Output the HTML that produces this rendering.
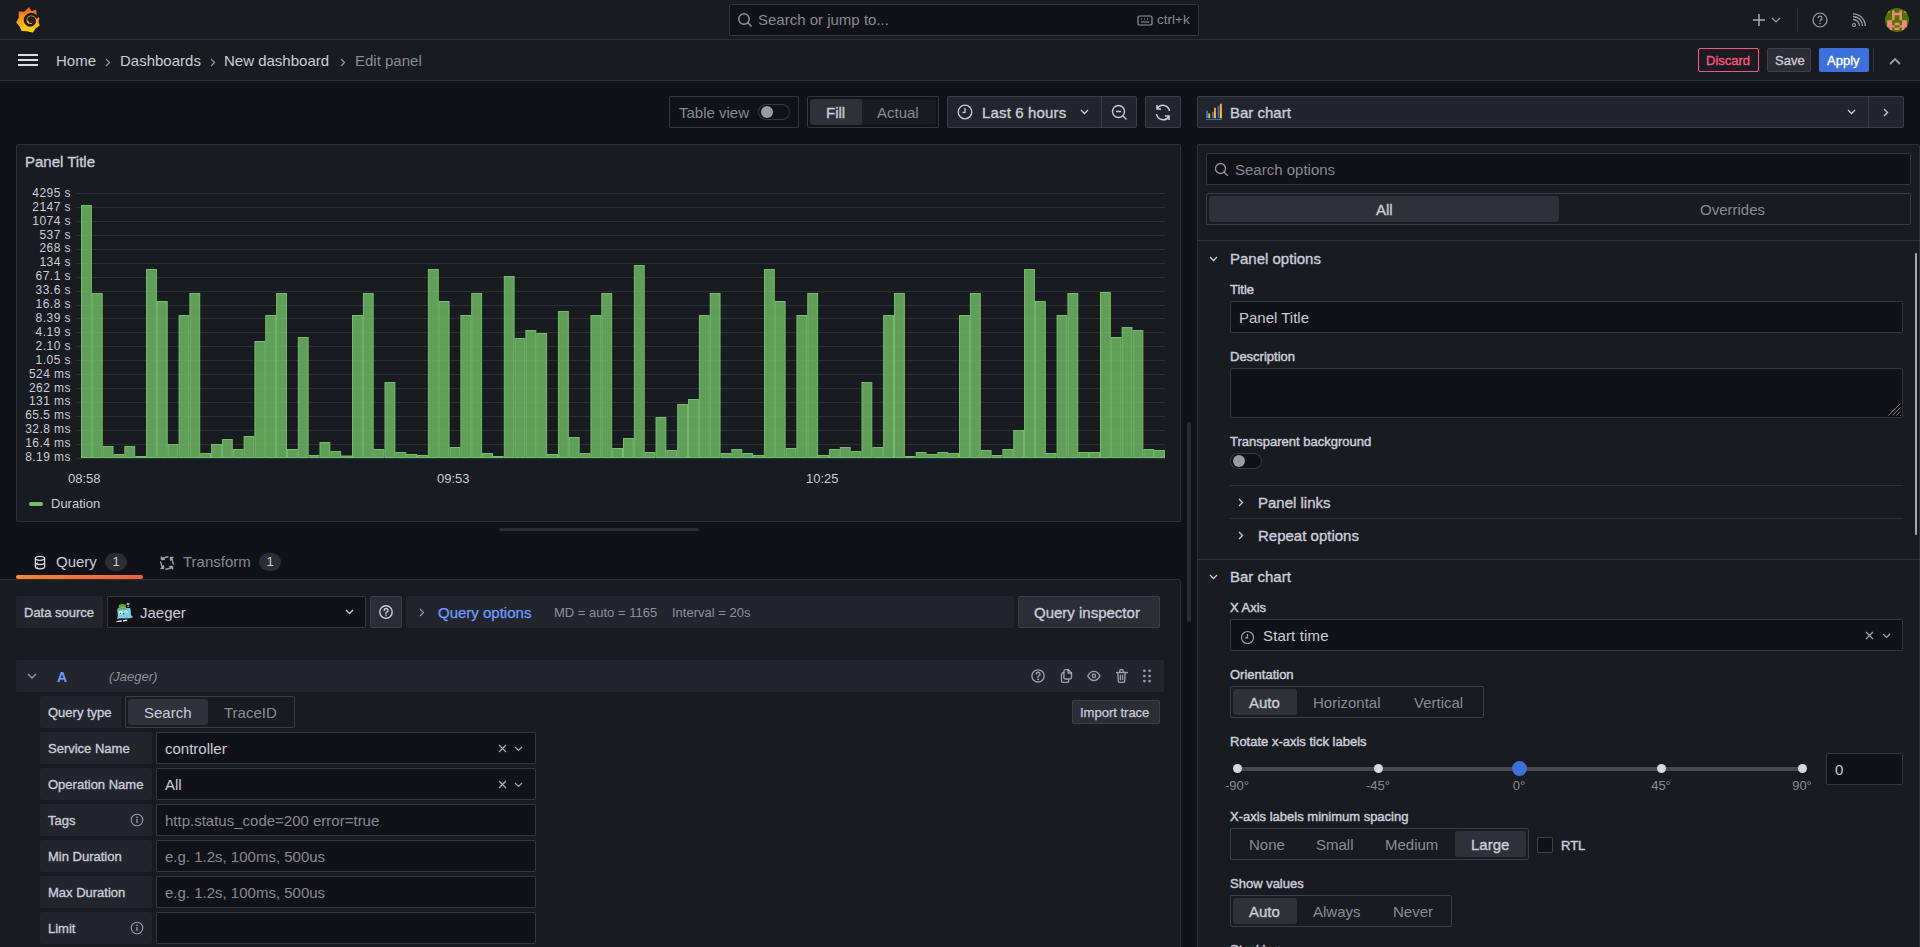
<!DOCTYPE html>
<html><head><meta charset="utf-8">
<style>
*{box-sizing:border-box;margin:0;padding:0}
html,body{width:1920px;height:947px;overflow:hidden}
body{background:#111217;font-family:"Liberation Sans",sans-serif;color:#ccccdc;position:relative;font-size:14px}
.a{position:absolute}
.t{position:absolute;white-space:nowrap;line-height:16px}
.m{-webkit-text-stroke:0.35px currentColor}
.sec{color:rgba(204,204,220,0.65)}
.lbl{position:absolute;white-space:nowrap;font-size:13px;line-height:14px;margin-top:0.5px;-webkit-text-stroke:0.45px currentColor;color:#ccccdc}
.inp{position:absolute;background:#111217;border:1px solid rgba(204,204,220,0.2);border-radius:2px}
.btn2{position:absolute;background:#22252b;border:1px solid rgba(204,204,220,0.15);border-radius:2px}
.flab{position:absolute;background:#22252b;border-radius:2px}
.rg{position:absolute;border:1px solid rgba(204,204,220,0.2);border-radius:2px;background:#181b1f}
.rsel{position:absolute;background:#2e3137;border-radius:3px}
svg{position:absolute;overflow:visible}
</style></head><body>

<!-- ===== TOP NAV ===== -->
<div class="a" style="left:0;top:0;width:1920px;height:40px;background:#181b1f;border-bottom:1px solid rgba(204,204,220,0.12)"></div>
<!-- grafana logo -->
<svg style="left:12px;top:4px" width="32" height="32" viewBox="0 0 32 32">
 <defs><linearGradient id="lg" x1="0" y1="1" x2="0" y2="0"><stop offset="0" stop-color="#fbd30c"/><stop offset="0.55" stop-color="#f99a1f"/><stop offset="1" stop-color="#f05a28"/></linearGradient></defs>
 <path fill="url(#lg)" stroke="url(#lg)" stroke-width="1.2" stroke-linejoin="round" d="M16.90 3.90 L19.32 8.09 L23.60 6.40 L24.14 11.66 L26.70 14.50 L25.88 17.74 L27.00 21.30 L23.13 23.94 L20.60 28.00 L15.27 26.75 L10.10 26.40 L8.07 22.15 L4.90 18.40 L7.26 13.97 L7.30 8.10 L12.85 8.24Z"/>
 <path fill="none" stroke="#181b1f" stroke-width="2.6" stroke-linecap="round" d="M24.88 13.31 L24.45 12.71 L23.96 12.16 L23.42 11.67 L22.84 11.24 L22.22 10.88 L21.57 10.60 L20.90 10.38 L20.22 10.24 L19.53 10.17 L18.84 10.18 L18.16 10.26 L17.51 10.40 L16.87 10.62 L16.27 10.90 L15.71 11.24 L15.20 11.63 L14.73 12.07 L14.31 12.56 L13.96 13.08 L13.66 13.63 L13.43 14.20 L13.26 14.79 L13.15 15.39 L13.11 15.99 L13.14 16.59 L13.22 17.17 L13.37 17.73 L13.58 18.27 L13.84 18.78 L14.14 19.26 L14.50 19.69 L14.89 20.08 L15.32 20.42 L15.77 20.71 L16.25 20.95 L16.75 21.13 L17.26 21.25 L17.77 21.32 L18.28 21.34 L18.78 21.30 L19.27 21.21 L19.74 21.06 L20.19 20.88 L20.61 20.64 L21.00 20.37 L21.35 20.06 L21.66 19.72 L21.93 19.35 L22.15 18.96 L22.33 18.55 L22.47 18.14 L22.55 17.71 L22.59 17.29 L22.59 16.87 L22.53 16.46 L22.44 16.06 L22.31 15.68 L22.14 15.33 L21.93 14.99 L21.69 14.69 L21.43 14.42 L21.14 14.19 L20.84 13.99 L20.52 13.82 L20.19 13.70 L19.85 13.61 L19.51 13.56 L19.18 13.55 L18.85 13.57 L18.53 13.63 L18.23 13.72 L17.94 13.84 L17.67 13.99 L17.43 14.17 L17.21 14.36 L17.02 14.58 L16.86 14.81 L16.72 15.05 L16.62 15.29 L16.54 15.55"/>
 <circle cx="19" cy="17" r="2.3" fill="#181b1f"/>
</svg>
<!-- search -->
<div class="a" style="left:729px;top:4px;width:470px;height:32px;background:#111217;border:1px solid rgba(204,204,220,0.2);border-radius:2px"></div>
<svg style="left:737px;top:12px" width="16" height="16" viewBox="0 0 16 16"><circle cx="7" cy="7" r="5.2" fill="none" stroke="#ccccdc" stroke-opacity=".7" stroke-width="1.4"/><path d="M11 11l3.5 3.5" stroke="#ccccdc" stroke-opacity=".7" stroke-width="1.4"/></svg>
<div class="t sec" style="left:758px;top:12px;font-size:15px">Search or jump to...</div>
<svg style="left:1137px;top:15px" width="16" height="11" viewBox="0 0 16 11"><rect x="1" y="1" width="14" height="9" rx="1.5" fill="none" stroke="#ccccdc" stroke-opacity=".7" stroke-width="1.2"/><path d="M4 4h1M7 4h1M10 4h1M4 7h8" stroke="#ccccdc" stroke-opacity=".7" stroke-width="1.2"/></svg>
<div class="t sec" style="left:1157px;top:12px;font-size:13.5px">ctrl+k</div>
<!-- right icons -->
<svg style="left:1752px;top:13px" width="14" height="14" viewBox="0 0 14 14"><path d="M7 1v12M1 7h12" stroke="#ccccdc" stroke-opacity=".8" stroke-width="1.5"/></svg>
<svg style="left:1771px;top:17px" width="10" height="6" viewBox="0 0 10 6"><path d="M1 1l4 4 4-4" fill="none" stroke="#ccccdc" stroke-opacity=".75" stroke-width="1.2"/></svg>
<div class="a" style="left:1797px;top:8px;width:1px;height:24px;background:rgba(204,204,220,0.15)"></div>
<svg style="left:1812px;top:12px" width="16" height="16" viewBox="0 0 16 16"><circle cx="8" cy="8" r="7" fill="none" stroke="#ccccdc" stroke-opacity=".75" stroke-width="1.2"/><path d="M6 6.2a2 2 0 1 1 2.6 1.9c-.4.2-.6.5-.6.9v.6" fill="none" stroke="#ccccdc" stroke-opacity=".75" stroke-width="1.2"/><circle cx="8" cy="11.5" r=".8" fill="#ccccdc" fill-opacity=".75"/></svg>
<svg style="left:1851px;top:13px" width="16" height="15" viewBox="0 0 16 15"><circle cx="3" cy="12" r="1.5" fill="none" stroke="#ccccdc" stroke-opacity=".75" stroke-width="1.2"/><path d="M2 6.5a6.5 6.5 0 0 1 6.5 6.5M2 3.5a9.5 9.5 0 0 1 9.5 9.5M2 .8A12.2 12.2 0 0 1 14.2 13" fill="none" stroke="#ccccdc" stroke-opacity=".75" stroke-width="1.3"/></svg>
<svg style="left:1885px;top:8px" width="24" height="24" viewBox="0 0 24 24"><defs><clipPath id="av"><circle cx="12" cy="12" r="12"/></clipPath></defs><g clip-path="url(#av)"><rect width="24" height="24" fill="#4e7300"/><path fill="#f28a7c" d="M2.20 2.40h2.455v2.455h-2.455zM19.39 2.40h2.455v2.455h-2.455zM7.11 2.40h2.455v2.455h-2.455zM7.11 4.86h2.455v2.455h-2.455zM7.11 7.31h2.455v2.455h-2.455zM7.11 9.77h2.455v2.455h-2.455zM14.48 2.40h2.455v2.455h-2.455zM14.48 4.86h2.455v2.455h-2.455zM14.48 7.31h2.455v2.455h-2.455zM14.48 9.77h2.455v2.455h-2.455zM9.57 4.86h2.455v2.455h-2.455zM12.02 4.86h2.455v2.455h-2.455zM2.20 12.22h2.455v2.455h-2.455zM4.66 12.22h2.455v2.455h-2.455zM2.20 14.68h2.455v2.455h-2.455zM4.66 14.68h2.455v2.455h-2.455zM2.20 17.13h2.455v2.455h-2.455zM4.66 17.13h2.455v2.455h-2.455zM7.11 17.13h2.455v2.455h-2.455zM4.66 19.59h2.455v2.455h-2.455zM16.93 12.22h2.455v2.455h-2.455zM19.39 12.22h2.455v2.455h-2.455zM16.93 14.68h2.455v2.455h-2.455zM19.39 14.68h2.455v2.455h-2.455zM16.93 17.13h2.455v2.455h-2.455zM19.39 17.13h2.455v2.455h-2.455zM14.48 17.13h2.455v2.455h-2.455zM16.93 19.59h2.455v2.455h-2.455zM9.57 14.68h2.455v2.455h-2.455zM12.02 14.68h2.455v2.455h-2.455zM9.57 19.59h2.455v2.455h-2.455zM12.02 19.59h2.455v2.455h-2.455z"/></g></svg>

<!-- ===== BREADCRUMB BAR ===== -->
<div class="a" style="left:0;top:40px;width:1920px;height:41px;background:#181b1f;border-bottom:1px solid rgba(204,204,220,0.12)"></div>
<svg style="left:18px;top:53px" width="20" height="14" viewBox="0 0 20 14"><path d="M0 2h20M0 7h20M0 12h20" stroke="#dcdcea" stroke-width="2"/></svg>
<div class="t" style="left:56px;top:53px;font-size:15px">Home</div>
<svg style="left:105px;top:57.5px" width="6" height="9" viewBox="0 0 6 9"><path d="M1 1l3.5 3.5L1 8" fill="none" stroke="#ccccdc" stroke-opacity=".7" stroke-width="1.2"/></svg>
<div class="t" style="left:120px;top:53px;font-size:15px">Dashboards</div>
<svg style="left:210px;top:57.5px" width="6" height="9" viewBox="0 0 6 9"><path d="M1 1l3.5 3.5L1 8" fill="none" stroke="#ccccdc" stroke-opacity=".7" stroke-width="1.2"/></svg>
<div class="t" style="left:224px;top:53px;font-size:15px">New dashboard</div>
<svg style="left:340px;top:57.5px" width="6" height="9" viewBox="0 0 6 9"><path d="M1 1l3.5 3.5L1 8" fill="none" stroke="#ccccdc" stroke-opacity=".7" stroke-width="1.2"/></svg>
<div class="t sec" style="left:355px;top:53px;font-size:15px">Edit panel</div>

<div class="a" style="left:1698px;top:48px;width:61px;height:24px;border:1px solid #ff5286;border-radius:2px"></div>
<div class="t m" style="left:1706px;top:53px;font-size:13px;color:#ff5286">Discard</div>
<div class="a" style="left:1767px;top:48px;width:44px;height:24px;background:#2c2e33;border:1px solid rgba(204,204,220,0.12);border-radius:2px"></div>
<div class="t m" style="left:1775px;top:53px;font-size:13px;color:#ccccdc">Save</div>
<div class="a" style="left:1819px;top:48px;width:50px;height:24px;background:#3d71d9;border-radius:2px"></div>
<div class="t m" style="left:1827px;top:53px;font-size:13px;color:#ffffff">Apply</div>
<div class="a" style="left:1873px;top:48px;width:1px;height:24px;background:rgba(204,204,220,0.15)"></div>
<svg style="left:1889px;top:58px" width="12" height="7" viewBox="0 0 12 7"><path d="M1 6l5-5 5 5" fill="none" stroke="#ccccdc" stroke-opacity=".75" stroke-width="1.8"/></svg>

<!-- ===== TOOLBAR ===== -->
<div class="a" style="left:669px;top:96px;width:130px;height:32px;border:1px solid rgba(204,204,220,0.2);border-radius:2px"></div>
<div class="t sec" style="left:679px;top:105px;font-size:15px">Table view</div>
<div class="a" style="left:758px;top:104px;width:32px;height:16px;border:1px solid rgba(204,204,220,0.2);border-radius:8px;background:#111217"></div>
<div class="a" style="left:761px;top:106px;width:12px;height:12px;border-radius:6px;background:#9a9aa3"></div>

<div class="a" style="left:807px;top:96px;width:132px;height:32px;border:1px solid rgba(204,204,220,0.2);border-radius:2px;background:#111217"></div><div class="a" style="left:810px;top:99px;width:126px;height:26px;background:#181b1f;border-radius:2px"></div>
<div class="rsel" style="left:810px;top:99px;width:52px;height:26px"></div>
<div class="t m" style="left:826px;top:105px;font-size:15px">Fill</div>
<div class="t sec" style="left:877px;top:105px;font-size:15px">Actual</div>

<div class="btn2" style="left:947px;top:96px;width:190px;height:32px"></div>
<div class="a" style="left:1101px;top:96px;width:1px;height:32px;background:rgba(204,204,220,0.15)"></div>
<svg style="left:957px;top:104px" width="16" height="16" viewBox="0 0 16 16"><circle cx="8" cy="8" r="6.8" fill="none" stroke="#ccccdc" stroke-width="1.3"/><path d="M8 4v4.3H5.5" fill="none" stroke="#ccccdc" stroke-width="1.3"/></svg>
<div class="t m" style="left:982px;top:105px;font-size:15px;letter-spacing:0.15px">Last 6 hours</div>
<svg style="left:1080px;top:109px" width="9" height="6" viewBox="0 0 9 6"><path d="M1 1l3.5 3.5L8 1" fill="none" stroke="#ccccdc" stroke-width="1.3"/></svg>
<svg style="left:1111px;top:104px" width="17" height="17" viewBox="0 0 17 17"><circle cx="7.5" cy="7.5" r="6" fill="none" stroke="#ccccdc" stroke-width="1.4"/><path d="M12 12l3.5 3.5M5 7.5h5" stroke="#ccccdc" stroke-width="1.4"/></svg>
<div class="btn2" style="left:1145px;top:96px;width:36px;height:32px"></div>
<svg style="left:1154px;top:104px" width="18" height="17" viewBox="0 0 18 17"><path d="M15.5 7A6.8 6.8 0 0 0 3 4.5M2.5 10A6.8 6.8 0 0 0 15 12.5" fill="none" stroke="#ccccdc" stroke-width="1.5"/><path d="M3 1v4h4M15 16v-4h-4" fill="none" stroke="#ccccdc" stroke-width="1.5"/></svg>

<!-- ===== PANEL ===== -->
<div class="a" style="left:16px;top:144px;width:1165px;height:378px;background:#181b1f;border:1px solid rgba(204,204,220,0.12);border-radius:2px"></div>
<div class="t m" style="left:25px;top:154px;font-size:15px">Panel Title</div>
<svg class="a" style="left:0;top:0" width="1200" height="530" viewBox="0 0 1200 530"><line x1="76" y1="193.5" x2="1165" y2="193.5" stroke="rgba(240,250,255,0.09)" stroke-width="1"/><line x1="76" y1="207.5" x2="1165" y2="207.5" stroke="rgba(240,250,255,0.09)" stroke-width="1"/><line x1="76" y1="221.5" x2="1165" y2="221.5" stroke="rgba(240,250,255,0.09)" stroke-width="1"/><line x1="76" y1="235.5" x2="1165" y2="235.5" stroke="rgba(240,250,255,0.09)" stroke-width="1"/><line x1="76" y1="249.5" x2="1165" y2="249.5" stroke="rgba(240,250,255,0.09)" stroke-width="1"/><line x1="76" y1="263.5" x2="1165" y2="263.5" stroke="rgba(240,250,255,0.09)" stroke-width="1"/><line x1="76" y1="277.5" x2="1165" y2="277.5" stroke="rgba(240,250,255,0.09)" stroke-width="1"/><line x1="76" y1="291.5" x2="1165" y2="291.5" stroke="rgba(240,250,255,0.09)" stroke-width="1"/><line x1="76" y1="305.5" x2="1165" y2="305.5" stroke="rgba(240,250,255,0.09)" stroke-width="1"/><line x1="76" y1="318.5" x2="1165" y2="318.5" stroke="rgba(240,250,255,0.09)" stroke-width="1"/><line x1="76" y1="332.5" x2="1165" y2="332.5" stroke="rgba(240,250,255,0.09)" stroke-width="1"/><line x1="76" y1="346.5" x2="1165" y2="346.5" stroke="rgba(240,250,255,0.09)" stroke-width="1"/><line x1="76" y1="360.5" x2="1165" y2="360.5" stroke="rgba(240,250,255,0.09)" stroke-width="1"/><line x1="76" y1="374.5" x2="1165" y2="374.5" stroke="rgba(240,250,255,0.09)" stroke-width="1"/><line x1="76" y1="388.5" x2="1165" y2="388.5" stroke="rgba(240,250,255,0.09)" stroke-width="1"/><line x1="76" y1="402.5" x2="1165" y2="402.5" stroke="rgba(240,250,255,0.09)" stroke-width="1"/><line x1="76" y1="416.5" x2="1165" y2="416.5" stroke="rgba(240,250,255,0.09)" stroke-width="1"/><line x1="76" y1="430.5" x2="1165" y2="430.5" stroke="rgba(240,250,255,0.09)" stroke-width="1"/><line x1="76" y1="444.5" x2="1165" y2="444.5" stroke="rgba(240,250,255,0.09)" stroke-width="1"/><line x1="76" y1="458.5" x2="1165" y2="458.5" stroke="rgba(240,250,255,0.09)" stroke-width="1"/><rect x="81.50" y="205.5" width="9.84" height="252.0" fill="rgba(115,191,105,0.8)" stroke="#73bf69" stroke-width="1"/><rect x="92.34" y="293.5" width="9.84" height="164.0" fill="rgba(115,191,105,0.8)" stroke="#73bf69" stroke-width="1"/><rect x="103.18" y="446.5" width="9.84" height="11.0" fill="rgba(115,191,105,0.8)" stroke="#73bf69" stroke-width="1"/><rect x="114.02" y="454.5" width="9.84" height="3.0" fill="rgba(115,191,105,0.8)" stroke="#73bf69" stroke-width="1"/><rect x="124.86" y="446.5" width="9.84" height="11.0" fill="rgba(115,191,105,0.8)" stroke="#73bf69" stroke-width="1"/><rect x="135.70" y="456.5" width="9.84" height="1.0" fill="rgba(115,191,105,0.8)" stroke="#73bf69" stroke-width="1"/><rect x="146.54" y="269.5" width="9.84" height="188.0" fill="rgba(115,191,105,0.8)" stroke="#73bf69" stroke-width="1"/><rect x="157.38" y="301.5" width="9.84" height="156.0" fill="rgba(115,191,105,0.8)" stroke="#73bf69" stroke-width="1"/><rect x="168.22" y="444.5" width="9.84" height="13.0" fill="rgba(115,191,105,0.8)" stroke="#73bf69" stroke-width="1"/><rect x="179.06" y="315.5" width="9.84" height="142.0" fill="rgba(115,191,105,0.8)" stroke="#73bf69" stroke-width="1"/><rect x="189.90" y="293.5" width="9.84" height="164.0" fill="rgba(115,191,105,0.8)" stroke="#73bf69" stroke-width="1"/><rect x="200.74" y="453.5" width="9.84" height="4.0" fill="rgba(115,191,105,0.8)" stroke="#73bf69" stroke-width="1"/><rect x="211.58" y="444.5" width="9.84" height="13.0" fill="rgba(115,191,105,0.8)" stroke="#73bf69" stroke-width="1"/><rect x="222.42" y="439.5" width="9.84" height="18.0" fill="rgba(115,191,105,0.8)" stroke="#73bf69" stroke-width="1"/><rect x="233.26" y="449.5" width="9.84" height="8.0" fill="rgba(115,191,105,0.8)" stroke="#73bf69" stroke-width="1"/><rect x="244.10" y="436.5" width="9.84" height="21.0" fill="rgba(115,191,105,0.8)" stroke="#73bf69" stroke-width="1"/><rect x="254.94" y="341.5" width="9.84" height="116.0" fill="rgba(115,191,105,0.8)" stroke="#73bf69" stroke-width="1"/><rect x="265.78" y="315.5" width="9.84" height="142.0" fill="rgba(115,191,105,0.8)" stroke="#73bf69" stroke-width="1"/><rect x="276.62" y="293.5" width="9.84" height="164.0" fill="rgba(115,191,105,0.8)" stroke="#73bf69" stroke-width="1"/><rect x="287.46" y="449.5" width="9.84" height="8.0" fill="rgba(115,191,105,0.8)" stroke="#73bf69" stroke-width="1"/><rect x="298.30" y="337.5" width="9.84" height="120.0" fill="rgba(115,191,105,0.8)" stroke="#73bf69" stroke-width="1"/><rect x="309.14" y="455.5" width="9.84" height="2.0" fill="rgba(115,191,105,0.8)" stroke="#73bf69" stroke-width="1"/><rect x="319.98" y="442.5" width="9.84" height="15.0" fill="rgba(115,191,105,0.8)" stroke="#73bf69" stroke-width="1"/><rect x="330.82" y="451.5" width="9.84" height="6.0" fill="rgba(115,191,105,0.8)" stroke="#73bf69" stroke-width="1"/><rect x="341.66" y="456.0" width="9.84" height="1.5" fill="rgba(115,191,105,0.8)" stroke="#73bf69" stroke-width="1"/><rect x="352.50" y="315.5" width="9.84" height="142.0" fill="rgba(115,191,105,0.8)" stroke="#73bf69" stroke-width="1"/><rect x="363.34" y="293.5" width="9.84" height="164.0" fill="rgba(115,191,105,0.8)" stroke="#73bf69" stroke-width="1"/><rect x="374.18" y="449.5" width="9.84" height="8.0" fill="rgba(115,191,105,0.8)" stroke="#73bf69" stroke-width="1"/><rect x="385.02" y="382.5" width="9.84" height="75.0" fill="rgba(115,191,105,0.8)" stroke="#73bf69" stroke-width="1"/><rect x="395.86" y="452.5" width="9.84" height="5.0" fill="rgba(115,191,105,0.8)" stroke="#73bf69" stroke-width="1"/><rect x="406.70" y="454.5" width="9.84" height="3.0" fill="rgba(115,191,105,0.8)" stroke="#73bf69" stroke-width="1"/><rect x="417.54" y="455.5" width="9.84" height="2.0" fill="rgba(115,191,105,0.8)" stroke="#73bf69" stroke-width="1"/><rect x="428.38" y="269.5" width="9.84" height="188.0" fill="rgba(115,191,105,0.8)" stroke="#73bf69" stroke-width="1"/><rect x="439.22" y="301.5" width="9.84" height="156.0" fill="rgba(115,191,105,0.8)" stroke="#73bf69" stroke-width="1"/><rect x="450.06" y="447.5" width="9.84" height="10.0" fill="rgba(115,191,105,0.8)" stroke="#73bf69" stroke-width="1"/><rect x="460.90" y="315.5" width="9.84" height="142.0" fill="rgba(115,191,105,0.8)" stroke="#73bf69" stroke-width="1"/><rect x="471.74" y="293.5" width="9.84" height="164.0" fill="rgba(115,191,105,0.8)" stroke="#73bf69" stroke-width="1"/><rect x="482.58" y="453.5" width="9.84" height="4.0" fill="rgba(115,191,105,0.8)" stroke="#73bf69" stroke-width="1"/><rect x="493.42" y="456.5" width="9.84" height="1.0" fill="rgba(115,191,105,0.8)" stroke="#73bf69" stroke-width="1"/><rect x="504.26" y="276.5" width="9.84" height="181.0" fill="rgba(115,191,105,0.8)" stroke="#73bf69" stroke-width="1"/><rect x="515.10" y="338.5" width="9.84" height="119.0" fill="rgba(115,191,105,0.8)" stroke="#73bf69" stroke-width="1"/><rect x="525.94" y="330.5" width="9.84" height="127.0" fill="rgba(115,191,105,0.8)" stroke="#73bf69" stroke-width="1"/><rect x="536.78" y="333.5" width="9.84" height="124.0" fill="rgba(115,191,105,0.8)" stroke="#73bf69" stroke-width="1"/><rect x="547.62" y="454.5" width="9.84" height="3.0" fill="rgba(115,191,105,0.8)" stroke="#73bf69" stroke-width="1"/><rect x="558.46" y="311.5" width="9.84" height="146.0" fill="rgba(115,191,105,0.8)" stroke="#73bf69" stroke-width="1"/><rect x="569.30" y="437.5" width="9.84" height="20.0" fill="rgba(115,191,105,0.8)" stroke="#73bf69" stroke-width="1"/><rect x="580.14" y="453.5" width="9.84" height="4.0" fill="rgba(115,191,105,0.8)" stroke="#73bf69" stroke-width="1"/><rect x="590.98" y="315.5" width="9.84" height="142.0" fill="rgba(115,191,105,0.8)" stroke="#73bf69" stroke-width="1"/><rect x="601.82" y="293.5" width="9.84" height="164.0" fill="rgba(115,191,105,0.8)" stroke="#73bf69" stroke-width="1"/><rect x="612.66" y="448.5" width="9.84" height="9.0" fill="rgba(115,191,105,0.8)" stroke="#73bf69" stroke-width="1"/><rect x="623.50" y="438.5" width="9.84" height="19.0" fill="rgba(115,191,105,0.8)" stroke="#73bf69" stroke-width="1"/><rect x="634.34" y="265.5" width="9.84" height="192.0" fill="rgba(115,191,105,0.8)" stroke="#73bf69" stroke-width="1"/><rect x="645.18" y="452.5" width="9.84" height="5.0" fill="rgba(115,191,105,0.8)" stroke="#73bf69" stroke-width="1"/><rect x="656.02" y="417.5" width="9.84" height="40.0" fill="rgba(115,191,105,0.8)" stroke="#73bf69" stroke-width="1"/><rect x="666.86" y="450.5" width="9.84" height="7.0" fill="rgba(115,191,105,0.8)" stroke="#73bf69" stroke-width="1"/><rect x="677.70" y="404.5" width="9.84" height="53.0" fill="rgba(115,191,105,0.8)" stroke="#73bf69" stroke-width="1"/><rect x="688.54" y="399.5" width="9.84" height="58.0" fill="rgba(115,191,105,0.8)" stroke="#73bf69" stroke-width="1"/><rect x="699.38" y="315.5" width="9.84" height="142.0" fill="rgba(115,191,105,0.8)" stroke="#73bf69" stroke-width="1"/><rect x="710.22" y="293.5" width="9.84" height="164.0" fill="rgba(115,191,105,0.8)" stroke="#73bf69" stroke-width="1"/><rect x="721.06" y="453.5" width="9.84" height="4.0" fill="rgba(115,191,105,0.8)" stroke="#73bf69" stroke-width="1"/><rect x="731.90" y="449.5" width="9.84" height="8.0" fill="rgba(115,191,105,0.8)" stroke="#73bf69" stroke-width="1"/><rect x="742.74" y="453.5" width="9.84" height="4.0" fill="rgba(115,191,105,0.8)" stroke="#73bf69" stroke-width="1"/><rect x="753.58" y="455.5" width="9.84" height="2.0" fill="rgba(115,191,105,0.8)" stroke="#73bf69" stroke-width="1"/><rect x="764.42" y="269.5" width="9.84" height="188.0" fill="rgba(115,191,105,0.8)" stroke="#73bf69" stroke-width="1"/><rect x="775.26" y="301.5" width="9.84" height="156.0" fill="rgba(115,191,105,0.8)" stroke="#73bf69" stroke-width="1"/><rect x="786.10" y="448.5" width="9.84" height="9.0" fill="rgba(115,191,105,0.8)" stroke="#73bf69" stroke-width="1"/><rect x="796.94" y="315.5" width="9.84" height="142.0" fill="rgba(115,191,105,0.8)" stroke="#73bf69" stroke-width="1"/><rect x="807.78" y="293.5" width="9.84" height="164.0" fill="rgba(115,191,105,0.8)" stroke="#73bf69" stroke-width="1"/><rect x="818.62" y="455.5" width="9.84" height="2.0" fill="rgba(115,191,105,0.8)" stroke="#73bf69" stroke-width="1"/><rect x="829.46" y="449.5" width="9.84" height="8.0" fill="rgba(115,191,105,0.8)" stroke="#73bf69" stroke-width="1"/><rect x="840.30" y="447.5" width="9.84" height="10.0" fill="rgba(115,191,105,0.8)" stroke="#73bf69" stroke-width="1"/><rect x="851.14" y="451.5" width="9.84" height="6.0" fill="rgba(115,191,105,0.8)" stroke="#73bf69" stroke-width="1"/><rect x="861.98" y="382.5" width="9.84" height="75.0" fill="rgba(115,191,105,0.8)" stroke="#73bf69" stroke-width="1"/><rect x="872.82" y="447.5" width="9.84" height="10.0" fill="rgba(115,191,105,0.8)" stroke="#73bf69" stroke-width="1"/><rect x="883.66" y="315.5" width="9.84" height="142.0" fill="rgba(115,191,105,0.8)" stroke="#73bf69" stroke-width="1"/><rect x="894.50" y="293.5" width="9.84" height="164.0" fill="rgba(115,191,105,0.8)" stroke="#73bf69" stroke-width="1"/><rect x="905.34" y="456.5" width="9.84" height="1.0" fill="rgba(115,191,105,0.8)" stroke="#73bf69" stroke-width="1"/><rect x="916.18" y="452.5" width="9.84" height="5.0" fill="rgba(115,191,105,0.8)" stroke="#73bf69" stroke-width="1"/><rect x="927.02" y="454.5" width="9.84" height="3.0" fill="rgba(115,191,105,0.8)" stroke="#73bf69" stroke-width="1"/><rect x="937.86" y="452.5" width="9.84" height="5.0" fill="rgba(115,191,105,0.8)" stroke="#73bf69" stroke-width="1"/><rect x="948.70" y="453.5" width="9.84" height="4.0" fill="rgba(115,191,105,0.8)" stroke="#73bf69" stroke-width="1"/><rect x="959.54" y="315.5" width="9.84" height="142.0" fill="rgba(115,191,105,0.8)" stroke="#73bf69" stroke-width="1"/><rect x="970.38" y="293.5" width="9.84" height="164.0" fill="rgba(115,191,105,0.8)" stroke="#73bf69" stroke-width="1"/><rect x="981.22" y="450.5" width="9.84" height="7.0" fill="rgba(115,191,105,0.8)" stroke="#73bf69" stroke-width="1"/><rect x="992.06" y="455.5" width="9.84" height="2.0" fill="rgba(115,191,105,0.8)" stroke="#73bf69" stroke-width="1"/><rect x="1002.90" y="449.5" width="9.84" height="8.0" fill="rgba(115,191,105,0.8)" stroke="#73bf69" stroke-width="1"/><rect x="1013.74" y="430.5" width="9.84" height="27.0" fill="rgba(115,191,105,0.8)" stroke="#73bf69" stroke-width="1"/><rect x="1024.58" y="269.5" width="9.84" height="188.0" fill="rgba(115,191,105,0.8)" stroke="#73bf69" stroke-width="1"/><rect x="1035.42" y="301.5" width="9.84" height="156.0" fill="rgba(115,191,105,0.8)" stroke="#73bf69" stroke-width="1"/><rect x="1046.26" y="453.5" width="9.84" height="4.0" fill="rgba(115,191,105,0.8)" stroke="#73bf69" stroke-width="1"/><rect x="1057.10" y="315.5" width="9.84" height="142.0" fill="rgba(115,191,105,0.8)" stroke="#73bf69" stroke-width="1"/><rect x="1067.94" y="293.5" width="9.84" height="164.0" fill="rgba(115,191,105,0.8)" stroke="#73bf69" stroke-width="1"/><rect x="1078.78" y="452.5" width="9.84" height="5.0" fill="rgba(115,191,105,0.8)" stroke="#73bf69" stroke-width="1"/><rect x="1089.62" y="452.5" width="9.84" height="5.0" fill="rgba(115,191,105,0.8)" stroke="#73bf69" stroke-width="1"/><rect x="1100.46" y="292.5" width="9.84" height="165.0" fill="rgba(115,191,105,0.8)" stroke="#73bf69" stroke-width="1"/><rect x="1111.30" y="337.5" width="9.84" height="120.0" fill="rgba(115,191,105,0.8)" stroke="#73bf69" stroke-width="1"/><rect x="1122.14" y="327.5" width="9.84" height="130.0" fill="rgba(115,191,105,0.8)" stroke="#73bf69" stroke-width="1"/><rect x="1132.98" y="330.5" width="9.84" height="127.0" fill="rgba(115,191,105,0.8)" stroke="#73bf69" stroke-width="1"/><rect x="1143.82" y="449.5" width="9.84" height="8.0" fill="rgba(115,191,105,0.8)" stroke="#73bf69" stroke-width="1"/><rect x="1154.66" y="450.5" width="9.84" height="7.0" fill="rgba(115,191,105,0.8)" stroke="#73bf69" stroke-width="1"/></svg>
<div id="ylab" class="a" style="left:0;top:0">
<div class="t" style="left:0;width:71px;top:184.8px;font-size:12px;text-align:right;letter-spacing:0.45px;margin-right:-0.45px">4295 s</div>
<div class="t" style="left:0;width:71px;top:198.7px;font-size:12px;text-align:right;letter-spacing:0.45px;margin-right:-0.45px">2147 s</div>
<div class="t" style="left:0;width:71px;top:212.6px;font-size:12px;text-align:right;letter-spacing:0.45px;margin-right:-0.45px">1074 s</div>
<div class="t" style="left:0;width:71px;top:226.5px;font-size:12px;text-align:right;letter-spacing:0.45px;margin-right:-0.45px">537 s</div>
<div class="t" style="left:0;width:71px;top:240.4px;font-size:12px;text-align:right;letter-spacing:0.45px;margin-right:-0.45px">268 s</div>
<div class="t" style="left:0;width:71px;top:254.3px;font-size:12px;text-align:right;letter-spacing:0.45px;margin-right:-0.45px">134 s</div>
<div class="t" style="left:0;width:71px;top:268.2px;font-size:12px;text-align:right;letter-spacing:0.45px;margin-right:-0.45px">67.1 s</div>
<div class="t" style="left:0;width:71px;top:282.1px;font-size:12px;text-align:right;letter-spacing:0.45px;margin-right:-0.45px">33.6 s</div>
<div class="t" style="left:0;width:71px;top:296.0px;font-size:12px;text-align:right;letter-spacing:0.45px;margin-right:-0.45px">16.8 s</div>
<div class="t" style="left:0;width:71px;top:309.9px;font-size:12px;text-align:right;letter-spacing:0.45px;margin-right:-0.45px">8.39 s</div>
<div class="t" style="left:0;width:71px;top:323.9px;font-size:12px;text-align:right;letter-spacing:0.45px;margin-right:-0.45px">4.19 s</div>
<div class="t" style="left:0;width:71px;top:337.8px;font-size:12px;text-align:right;letter-spacing:0.45px;margin-right:-0.45px">2.10 s</div>
<div class="t" style="left:0;width:71px;top:351.7px;font-size:12px;text-align:right;letter-spacing:0.45px;margin-right:-0.45px">1.05 s</div>
<div class="t" style="left:0;width:71px;top:365.6px;font-size:12px;text-align:right;letter-spacing:0.45px;margin-right:-0.45px">524 ms</div>
<div class="t" style="left:0;width:71px;top:379.5px;font-size:12px;text-align:right;letter-spacing:0.45px;margin-right:-0.45px">262 ms</div>
<div class="t" style="left:0;width:71px;top:393.4px;font-size:12px;text-align:right;letter-spacing:0.45px;margin-right:-0.45px">131 ms</div>
<div class="t" style="left:0;width:71px;top:407.3px;font-size:12px;text-align:right;letter-spacing:0.45px;margin-right:-0.45px">65.5 ms</div>
<div class="t" style="left:0;width:71px;top:421.2px;font-size:12px;text-align:right;letter-spacing:0.45px;margin-right:-0.45px">32.8 ms</div>
<div class="t" style="left:0;width:71px;top:435.1px;font-size:12px;text-align:right;letter-spacing:0.45px;margin-right:-0.45px">16.4 ms</div>
<div class="t" style="left:0;width:71px;top:449.0px;font-size:12px;text-align:right;letter-spacing:0.45px;margin-right:-0.45px">8.19 ms</div>
</div>
<div class="t" style="left:68px;top:471px;font-size:13px">08:58</div>
<div class="t" style="left:437px;top:471px;font-size:13px">09:53</div>
<div class="t" style="left:806px;top:471px;font-size:13px">10:25</div>
<div class="a" style="left:29px;top:502px;width:14px;height:4px;border-radius:2px;background:#73bf69"></div>
<div class="t" style="left:51px;top:496px;font-size:13px">Duration</div>
<div class="a" style="left:499px;top:528px;width:200px;height:3px;border-radius:2px;background:#2a2d33"></div>

<!-- left scrollbar -->
<div class="a" style="left:1187px;top:422px;width:4px;height:200px;border-radius:2px;background:#2a2d33"></div>

<!-- ===== TABS ===== -->
<svg style="left:30px;top:552px" width="20" height="20" viewBox="30 552 20 20"><path fill="none" stroke="#dcdcea" stroke-width="1.3" d="M35.4 558.3a4.6 2 0 0 1 9.2 0v8.5a4.6 2 0 0 1-9.2 0zM35.4 558.3a4.6 2 0 0 0 9.2 0M35.4 562.5a4.6 2 0 0 0 9.2 0"/><circle cx="37.4" cy="562.9" r=".6" fill="#dcdcea"/><circle cx="37.4" cy="567.1" r=".6" fill="#dcdcea"/></svg>
<div class="t" style="left:56px;top:554px;font-size:15px">Query</div>
<div class="a" style="left:105px;top:553px;width:22px;height:18px;border-radius:9px;background:#2a2d33"></div>
<div class="t" style="left:105px;width:22px;text-align:center;top:554px;font-size:13px">1</div>
<div class="a" style="left:16px;top:575px;width:127px;height:4px;border-radius:2px;background:linear-gradient(90deg,#ff8833,#f55f3e)"></div>
<svg style="left:158px;top:554px" width="18" height="18" viewBox="0 0 18 18"><path fill="#ccccdc" fill-opacity=".72" stroke="#ccccdc" stroke-opacity=".72" stroke-width=".6" stroke-linejoin="round" d="M3.10 2.50L3.20 6.00L7.00 5.70Z"/><path stroke="#ccccdc" stroke-opacity=".72" stroke-width="1.5" stroke-linecap="round" d="M5.30 4.00L9.90 2.70"/><path fill="#ccccdc" fill-opacity=".72" stroke="#ccccdc" stroke-opacity=".72" stroke-width=".6" stroke-linejoin="round" d="M15.50 3.10L12.00 3.20L12.30 7.00Z"/><path stroke="#ccccdc" stroke-opacity=".72" stroke-width="1.5" stroke-linecap="round" d="M14.00 5.30L15.30 9.90"/><path fill="#ccccdc" fill-opacity=".72" stroke="#ccccdc" stroke-opacity=".72" stroke-width=".6" stroke-linejoin="round" d="M14.90 15.50L14.80 12.00L11.00 12.30Z"/><path stroke="#ccccdc" stroke-opacity=".72" stroke-width="1.5" stroke-linecap="round" d="M12.70 14.00L8.10 15.30"/><path fill="#ccccdc" fill-opacity=".72" stroke="#ccccdc" stroke-opacity=".72" stroke-width=".6" stroke-linejoin="round" d="M2.50 14.90L6.00 14.80L5.70 11.00Z"/><path stroke="#ccccdc" stroke-opacity=".72" stroke-width="1.5" stroke-linecap="round" d="M4.00 12.70L2.70 8.10"/></svg>
<div class="t sec" style="left:183px;top:554px;font-size:15px">Transform</div>
<div class="a" style="left:259px;top:553px;width:22px;height:18px;border-radius:9px;background:#2a2d33"></div>
<div class="t" style="left:259px;width:22px;text-align:center;top:554px;font-size:13px">1</div>

<!-- ===== QUERY CONTAINER ===== -->
<div class="a" style="left:0;top:579px;width:1181px;height:380px;background:#181b1f;border-top:1px solid rgba(204,204,220,0.12);border-right:1px solid rgba(204,204,220,0.12);border-top-right-radius:3px"></div>

<div class="flab" style="left:16px;top:596px;width:87px;height:32px"></div>
<div class="t m" style="left:24px;top:605px;font-size:13px">Data source</div>
<div class="inp" style="left:107px;top:596px;width:259px;height:32px"></div>
<svg style="left:112px;top:600px" width="24" height="24" viewBox="0 0 24 24">
<path d="M5.3 9.6Q5.5 8.6 6.6 8.5L17.4 7.9Q18.4 7.9 18.5 8.9L19.2 17.2Q19.2 18.2 18.2 18.3L7 18.6Q6 18.6 5.9 17.6Z" fill="#72d3e6"/>
<path d="M5.6 8.8l1.6-1.7 1 1.6zM15 6.6l1.4-1.3.9 1.6z" fill="#72d3e6"/>
<ellipse cx="10.4" cy="6.4" rx="3.6" ry="2.4" fill="#5aa62f"/>
<path d="M6.6 8.3q3.5-1.6 7.4-.8l-.4 1.5q-3.3-.6-6.6.6z" fill="#c9b27a"/>
<path d="M6 9.5q4-1.3 8.2-.4" stroke="#4f9e2e" stroke-width="1" fill="none"/>
<path d="M14.2 4.9l1.6-2.6.9 1.3 1.2-.6-.6 1.8z" fill="#d9c08a"/>
<circle cx="8.7" cy="12.7" r="1.7" fill="#fff"/><circle cx="14" cy="11.6" r="1.5" fill="#fff"/>
<circle cx="8.4" cy="13.2" r=".6" fill="#222"/><circle cx="13.8" cy="12" r=".55" fill="#222"/>
<circle cx="11.6" cy="13.9" r=".75" fill="#222"/>
<ellipse cx="11.7" cy="15.3" rx="1.9" ry=".7" fill="#d9c08a"/>
<path d="M5.6 16.2l1.3 2.4-1.8.3zM18.9 15l2.3 2.3-1.9.4z" fill="#d9c08a"/>
<path d="M4.3 21.4q2.5-1.3 5.6-1.2l-.3 1.6q-2.6.1-5.3.4zM11 20.3l4.2-.7.1 1.4-4.1.4z" fill="#e6e6ea"/>
</svg>
<div class="t" style="left:140px;top:605px;font-size:15px">Jaeger</div>
<svg style="left:345px;top:609px" width="9" height="6" viewBox="0 0 9 6"><path d="M1 1l3.5 3.5L8 1" fill="none" stroke="#ccccdc" stroke-width="1.3"/></svg>
<div class="btn2" style="left:370px;top:596px;width:32px;height:32px;background:#2b2e35;border-color:rgba(204,204,220,0.1)"></div>
<svg style="left:378px;top:604px" width="16" height="16" viewBox="0 0 16 16"><circle cx="8" cy="8" r="6.2" fill="none" stroke="#ccccdc" stroke-width="1.4"/><path d="M6.2 6.4a1.9 1.9 0 1 1 2.5 1.8c-.4.2-.7.5-.7.9v.4" fill="none" stroke="#ccccdc" stroke-width="1.4" stroke-linecap="round"/><circle cx="8" cy="11.3" r=".8" fill="#ccccdc"/></svg>
<div class="flab" style="left:406px;top:596px;width:608px;height:32px"></div>
<svg style="left:419px;top:608px" width="6" height="9" viewBox="0 0 6 9"><path d="M1 1l3.5 3.5L1 8" fill="none" stroke="#ccccdc" stroke-opacity=".7" stroke-width="1.2"/></svg>
<div class="t m" style="left:438px;top:605px;font-size:15px;color:#6e9fff;-webkit-text-stroke-width:0.25px">Query options</div>
<div class="t sec" style="left:554px;top:605px;font-size:13px">MD = auto = 1165</div>
<div class="t sec" style="left:672px;top:605px;font-size:13px">Interval = 20s</div>
<div class="btn2" style="left:1018px;top:596px;width:142px;height:32px;background:#2b2e35;border-color:rgba(204,204,220,0.1)"></div>
<div class="t m" style="left:1034px;top:605px;font-size:15px">Query inspector</div>

<!-- query row A -->
<div class="flab" style="left:16px;top:660px;width:1148px;height:32px"></div>
<svg style="left:27px;top:673px" width="10" height="6" viewBox="0 0 10 6"><path d="M1 1l4 4 4-4" fill="none" stroke="#ccccdc" stroke-opacity=".7" stroke-width="1.3"/></svg>
<div class="t" style="left:57px;top:669px;font-size:14px;font-weight:bold;color:#6e9fff">A</div>
<div class="t sec" style="left:109px;top:669px;font-size:13px;font-style:italic">(Jaeger)</div>
<svg style="left:1025px;top:662px" width="135" height="28" viewBox="1025 662 135 28" fill="none" stroke="#ccccdc" stroke-opacity=".72" stroke-width="1.35" stroke-linecap="round" stroke-linejoin="round">
<circle cx="1038" cy="675.9" r="6.1"/><path d="M1036.2 674.2a1.9 1.9 0 1 1 2.6 1.7c-.5.2-.8.5-.8 1v.3"/><circle cx="1038" cy="679.3" r=".5" fill="#ccccdc" fill-opacity=".72" stroke-width="0.8"/>
<path d="M1063.9 677.4v-6.2a1.6 1.6 0 0 1 1.6-1.6h2.6l3.4 3.4v4.4a1.6 1.6 0 0 1-1.6 1.6h-4.4a1.6 1.6 0 0 1-1.6-1.6z"/><path d="M1068.1 669.6v3.4h3.4"/><path d="M1063.9 672.6h-.5a1.9 1.9 0 0 0-1.9 1.9v5.9a1.9 1.9 0 0 0 1.9 1.9h3.4a1.9 1.9 0 0 0 1.9-1.9v-.5"/>
<path d="M1087.8 675.9s2.4-4.6 6.1-4.6 6.1 4.6 6.1 4.6-2.4 4.6-6.1 4.6-6.1-4.6-6.1-4.6z"/><circle cx="1093.9" cy="675.9" r="1.7"/>
<path d="M1116.6 672.5h10.8M1119.7 672.5v-1.2a1.8 1.8 0 0 1 3.6 0v1.2M1117.8 672.5l.5 8.6a1.4 1.4 0 0 0 1.4 1.3h3.6a1.4 1.4 0 0 0 1.4-1.3l.5-8.6M1120.4 675.2v4.5M1122.6 675.2v4.5"/>
<g fill="#ccccdc" fill-opacity=".72" stroke="none"><circle cx="1144.4" cy="670.8" r="1.35"/><circle cx="1149.6" cy="670.8" r="1.35"/><circle cx="1144.4" cy="676" r="1.35"/><circle cx="1149.6" cy="676" r="1.35"/><circle cx="1144.4" cy="681.1" r="1.35"/><circle cx="1149.6" cy="681.1" r="1.35"/></g>
</svg>

<!-- query type -->
<div class="flab" style="left:40px;top:696px;width:81px;height:32px"></div>
<div class="t m" style="left:48px;top:705px;font-size:13px">Query type</div>
<div class="rg" style="left:125px;top:696px;width:170px;height:32px"></div>
<div class="rsel" style="left:128px;top:699px;width:80px;height:26px"></div>
<div class="t" style="left:144px;top:705px;font-size:15px">Search</div>
<div class="t sec" style="left:224px;top:705px;font-size:15px">TraceID</div>
<div class="btn2" style="left:1072px;top:700px;width:88px;height:24px;background:#2b2e35;border-color:rgba(204,204,220,0.1)"></div>
<div class="t m" style="left:1080px;top:705px;font-size:13px;-webkit-text-stroke-width:0.25px">Import trace</div>

<div class="flab" style="left:40px;top:732px;width:112px;height:32px"></div>
<div class="t m" style="left:48px;top:741px;font-size:13px">Service Name</div>
<div class="inp" style="left:156px;top:732px;width:380px;height:32px"></div>
<div class="t" style="left:165px;top:741px;font-size:15px">controller</div>
<svg style="left:498px;top:744px" width="9" height="9" viewBox="0 0 9 9"><path d="M1 1l7 7M8 1L1 8" stroke="#ccccdc" stroke-opacity=".8" stroke-width="1.2"/></svg>
<svg style="left:514px;top:746px" width="9" height="6" viewBox="0 0 9 6"><path d="M1 1l3.5 3.5L8 1" fill="none" stroke="#ccccdc" stroke-opacity=".8" stroke-width="1.2"/></svg>
<div class="flab" style="left:40px;top:768px;width:112px;height:32px"></div>
<div class="t m" style="left:48px;top:777px;font-size:13px">Operation Name</div>
<div class="inp" style="left:156px;top:768px;width:380px;height:32px"></div>
<div class="t" style="left:165px;top:777px;font-size:15px">All</div>
<svg style="left:498px;top:780px" width="9" height="9" viewBox="0 0 9 9"><path d="M1 1l7 7M8 1L1 8" stroke="#ccccdc" stroke-opacity=".8" stroke-width="1.2"/></svg>
<svg style="left:514px;top:782px" width="9" height="6" viewBox="0 0 9 6"><path d="M1 1l3.5 3.5L8 1" fill="none" stroke="#ccccdc" stroke-opacity=".8" stroke-width="1.2"/></svg>
<div class="flab" style="left:40px;top:804px;width:112px;height:32px"></div>
<div class="t m" style="left:48px;top:813px;font-size:13px">Tags</div>
<svg style="left:130px;top:813px" width="14" height="14" viewBox="0 0 14 14"><circle cx="7" cy="7" r="5.8" fill="none" stroke="#ccccdc" stroke-opacity=".7" stroke-width="1.1"/><path d="M7 6v4" stroke="#ccccdc" stroke-opacity=".7" stroke-width="1.3"/><circle cx="7" cy="4.2" r=".7" fill="#ccccdc"/></svg>
<div class="inp" style="left:156px;top:804px;width:380px;height:32px"></div>
<div class="t sec" style="left:165px;top:813px;font-size:15px">http.status_code=200 error=true</div>
<div class="flab" style="left:40px;top:840px;width:112px;height:32px"></div>
<div class="t m" style="left:48px;top:849px;font-size:13px">Min Duration</div>
<div class="inp" style="left:156px;top:840px;width:380px;height:32px"></div>
<div class="t sec" style="left:165px;top:849px;font-size:15px">e.g. 1.2s, 100ms, 500us</div>
<div class="flab" style="left:40px;top:876px;width:112px;height:32px"></div>
<div class="t m" style="left:48px;top:885px;font-size:13px">Max Duration</div>
<div class="inp" style="left:156px;top:876px;width:380px;height:32px"></div>
<div class="t sec" style="left:165px;top:885px;font-size:15px">e.g. 1.2s, 100ms, 500us</div>
<div class="flab" style="left:40px;top:912px;width:112px;height:32px"></div>
<div class="t m" style="left:48px;top:921px;font-size:13px">Limit</div>
<svg style="left:130px;top:921px" width="14" height="14" viewBox="0 0 14 14"><circle cx="7" cy="7" r="5.8" fill="none" stroke="#ccccdc" stroke-opacity=".7" stroke-width="1.1"/><path d="M7 6v4" stroke="#ccccdc" stroke-opacity=".7" stroke-width="1.3"/><circle cx="7" cy="4.2" r=".7" fill="#ccccdc"/></svg>
<div class="inp" style="left:156px;top:912px;width:380px;height:32px"></div>

<!-- ===== RIGHT PANE ===== -->
<div class="btn2" style="left:1197px;top:96px;width:707px;height:32px"></div>
<div class="a" style="left:1868px;top:96px;width:1px;height:32px;background:rgba(204,204,220,0.15)"></div>
<svg style="left:1200px;top:100px" width="30" height="25" viewBox="1200 100 30 25"><defs><linearGradient id="bo" x1="0" y1="0" x2="0" y2="1"><stop offset="0" stop-color="#ff9a2a"/><stop offset="1" stop-color="#ffd10b"/></linearGradient></defs>
<g fill="#3d73d6"><rect x="1206.1" y="110.7" width="1.8" height="7.5"/><rect x="1212" y="111.9" width="1.7" height="6.3"/><rect x="1217.7" y="105.7" width="1.7" height="12.5"/><rect x="1206.1" y="119" width="15.8" height="0.9"/></g>
<g fill="url(#bo)"><rect x="1208.3" y="113.3" width="1.9" height="4.9"/><rect x="1214" y="107.8" width="1.9" height="10.4"/><rect x="1219.9" y="103.75" width="2" height="14.45"/></g></svg>
<div class="t m" style="left:1230px;top:105px;font-size:15px">Bar chart</div>
<svg style="left:1847px;top:109px" width="9" height="6" viewBox="0 0 9 6"><path d="M1 1l3.5 3.5L8 1" fill="none" stroke="#ccccdc" stroke-width="1.3"/></svg>
<svg style="left:1883px;top:108px" width="6" height="9" viewBox="0 0 6 9"><path d="M1 1l3.5 3.5L1 8" fill="none" stroke="#ccccdc" stroke-width="1.3"/></svg>

<div class="a" style="left:1197px;top:144px;width:723px;height:810px;background:#181b1f;border:1px solid rgba(204,204,220,0.12);border-radius:2px"></div>
<div class="inp" style="left:1206px;top:153px;width:705px;height:32px"></div>
<svg style="left:1214px;top:162px" width="15" height="15" viewBox="0 0 15 15"><circle cx="6.5" cy="6.5" r="5" fill="none" stroke="#ccccdc" stroke-opacity=".7" stroke-width="1.3"/><path d="M10.2 10.2l3.5 3.5" stroke="#ccccdc" stroke-opacity=".7" stroke-width="1.3"/></svg>
<div class="t sec" style="left:1235px;top:162px;font-size:15px">Search options</div>
<div class="rg" style="left:1206px;top:193px;width:705px;height:32px"></div>
<div class="rsel" style="left:1209px;top:196px;width:350px;height:26px"></div>
<div class="t m" style="left:1376px;top:202px;font-size:15px">All</div>
<div class="t sec" style="left:1700px;top:202px;font-size:15px">Overrides</div>
<div class="a" style="left:1198px;top:240px;width:722px;height:1px;background:rgba(204,204,220,0.12)"></div>
<div class="a" style="left:1914.5px;top:253px;width:2.5px;height:282px;border-radius:2px;background:#a7a7b0"></div>

<svg style="left:1209px;top:256px" width="9" height="6" viewBox="0 0 9 6"><path d="M1 1l3.5 3.5L8 1" fill="none" stroke="#ccccdc" stroke-width="1.3"/></svg>
<div class="t m" style="left:1230px;top:251px;font-size:15px">Panel options</div>
<div class="lbl" style="left:1230px;top:282px">Title</div>
<div class="inp" style="left:1230px;top:301px;width:673px;height:32px"></div>
<div class="t" style="left:1239px;top:310px;font-size:15px">Panel Title</div>
<div class="lbl" style="left:1230px;top:349px">Description</div>
<div class="inp" style="left:1230px;top:368px;width:673px;height:50px"></div>
<svg style="left:1886px;top:401px" width="17" height="17" viewBox="1886 401 17 17"><path d="M1887 417L1902 402V417Z" fill="#0b0c0f"/><path d="M1888.3 415.6L1900.6 403.3M1892.3 415.6L1900.6 407.3M1896.3 415.6L1900.6 411.3" stroke="#80808a" stroke-width="1"/><circle cx="1900.5" cy="415.5" r=".6" fill="#9a9aa5"/></svg>
<div class="lbl" style="left:1230px;top:434px">Transparent background</div>
<div class="a" style="left:1230px;top:453px;width:32px;height:16px;border:1px solid rgba(204,204,220,0.2);border-radius:8px;background:#111217"></div>
<div class="a" style="left:1233px;top:455px;width:12px;height:12px;border-radius:6px;background:#9a9aa3"></div>
<div class="a" style="left:1230px;top:485px;width:673px;height:1px;background:rgba(204,204,220,0.12)"></div>
<svg style="left:1238px;top:498px" width="6" height="9" viewBox="0 0 6 9"><path d="M1 1l3.5 3.5L1 8" fill="none" stroke="#ccccdc" stroke-width="1.3"/></svg>
<div class="t m" style="left:1258px;top:495px;font-size:15px">Panel links</div>
<div class="a" style="left:1230px;top:518px;width:673px;height:1px;background:rgba(204,204,220,0.12)"></div>
<svg style="left:1238px;top:531px" width="6" height="9" viewBox="0 0 6 9"><path d="M1 1l3.5 3.5L1 8" fill="none" stroke="#ccccdc" stroke-width="1.3"/></svg>
<div class="t m" style="left:1258px;top:528px;font-size:15px">Repeat options</div>
<div class="a" style="left:1198px;top:559px;width:722px;height:1px;background:rgba(204,204,220,0.12)"></div>
<svg style="left:1209px;top:574px" width="9" height="6" viewBox="0 0 9 6"><path d="M1 1l3.5 3.5L8 1" fill="none" stroke="#ccccdc" stroke-width="1.3"/></svg>
<div class="t m" style="left:1230px;top:569px;font-size:15px">Bar chart</div>
<div class="lbl" style="left:1230px;top:600px">X Axis</div>
<div class="inp" style="left:1230px;top:619px;width:673px;height:32px"></div>
<svg style="left:1240px;top:629.5px" width="15" height="15" viewBox="0 0 15 15"><circle cx="7.5" cy="7.5" r="6" fill="none" stroke="#ccccdc" stroke-opacity=".75" stroke-width="1.2"/><path d="M7.5 4v3.8H5.2" fill="none" stroke="#ccccdc" stroke-opacity=".75" stroke-width="1.2"/></svg>
<div class="t" style="left:1263px;top:628px;font-size:15px;letter-spacing:0.15px">Start time</div>
<svg style="left:1865px;top:631px" width="9" height="9" viewBox="0 0 9 9"><path d="M1 1l7 7M8 1L1 8" stroke="#ccccdc" stroke-opacity=".8" stroke-width="1.2"/></svg>
<svg style="left:1882px;top:633px" width="9" height="6" viewBox="0 0 9 6"><path d="M1 1l3.5 3.5L8 1" fill="none" stroke="#ccccdc" stroke-opacity=".8" stroke-width="1.2"/></svg>
<div class="lbl" style="left:1230px;top:667px">Orientation</div>
<div class="rg" style="left:1230px;top:686px;width:254px;height:32px"></div>
<div class="rsel" style="left:1233px;top:689px;width:64px;height:26px"></div>
<div class="t m" style="left:1249px;top:695px;font-size:15px">Auto</div>
<div class="t sec" style="left:1313px;top:695px;font-size:15px">Horizontal</div>
<div class="t sec" style="left:1414px;top:695px;font-size:15px">Vertical</div>
<div class="lbl" style="left:1230px;top:734px">Rotate x-axis tick labels</div>
<div class="a" style="left:1237px;top:766.5px;width:565px;height:4px;border-radius:2px;background:#47494f"></div>
<div class="a" style="left:1232.5px;top:764px;width:9px;height:9px;border-radius:5px;background:#d8d9de"></div>
<div class="t sec" style="left:1207px;width:60px;text-align:center;top:778px;font-size:13px">-90°</div>
<div class="a" style="left:1373.5px;top:764px;width:9px;height:9px;border-radius:5px;background:#d8d9de"></div>
<div class="t sec" style="left:1348px;width:60px;text-align:center;top:778px;font-size:13px">-45°</div>
<div class="a" style="left:1656.5px;top:764px;width:9px;height:9px;border-radius:5px;background:#d8d9de"></div>
<div class="t sec" style="left:1631px;width:60px;text-align:center;top:778px;font-size:13px">45°</div>
<div class="a" style="left:1797.5px;top:764px;width:9px;height:9px;border-radius:5px;background:#d8d9de"></div>
<div class="t sec" style="left:1772px;width:60px;text-align:center;top:778px;font-size:13px">90°</div>
<div class="a" style="left:1512px;top:761px;width:15px;height:15px;border-radius:8px;background:#3d71d9"></div>
<div class="t sec" style="left:1489px;width:60px;text-align:center;top:778px;font-size:13px">0°</div>
<div class="inp" style="left:1826px;top:753px;width:77px;height:32px"></div>
<div class="t" style="left:1835px;top:762px;font-size:15px">0</div>
<div class="lbl" style="left:1230px;top:809px">X-axis labels minimum spacing</div>
<div class="rg" style="left:1230px;top:828px;width:299px;height:32px"></div>
<div class="t sec" style="left:1249px;top:837px;font-size:15px">None</div>
<div class="t sec" style="left:1316px;top:837px;font-size:15px">Small</div>
<div class="t sec" style="left:1385px;top:837px;font-size:15px">Medium</div>
<div class="rsel" style="left:1455px;top:831px;width:71px;height:26px"></div>
<div class="t m" style="left:1471px;top:837px;font-size:15px">Large</div>
<div class="a" style="left:1537px;top:837px;width:16px;height:16px;border:1px solid rgba(204,204,220,0.25);border-radius:2px;background:#111217"></div>
<div class="lbl" style="left:1561px;top:838px">RTL</div>
<div class="lbl" style="left:1230px;top:876px">Show values</div>
<div class="rg" style="left:1230px;top:895px;width:222px;height:32px"></div>
<div class="rsel" style="left:1233px;top:898px;width:64px;height:26px"></div>
<div class="t m" style="left:1249px;top:904px;font-size:15px">Auto</div>
<div class="t sec" style="left:1313px;top:904px;font-size:15px">Always</div>
<div class="t sec" style="left:1393px;top:904px;font-size:15px">Never</div>
<div class="lbl" style="left:1230px;top:942px">Stacking</div>

</body></html>
